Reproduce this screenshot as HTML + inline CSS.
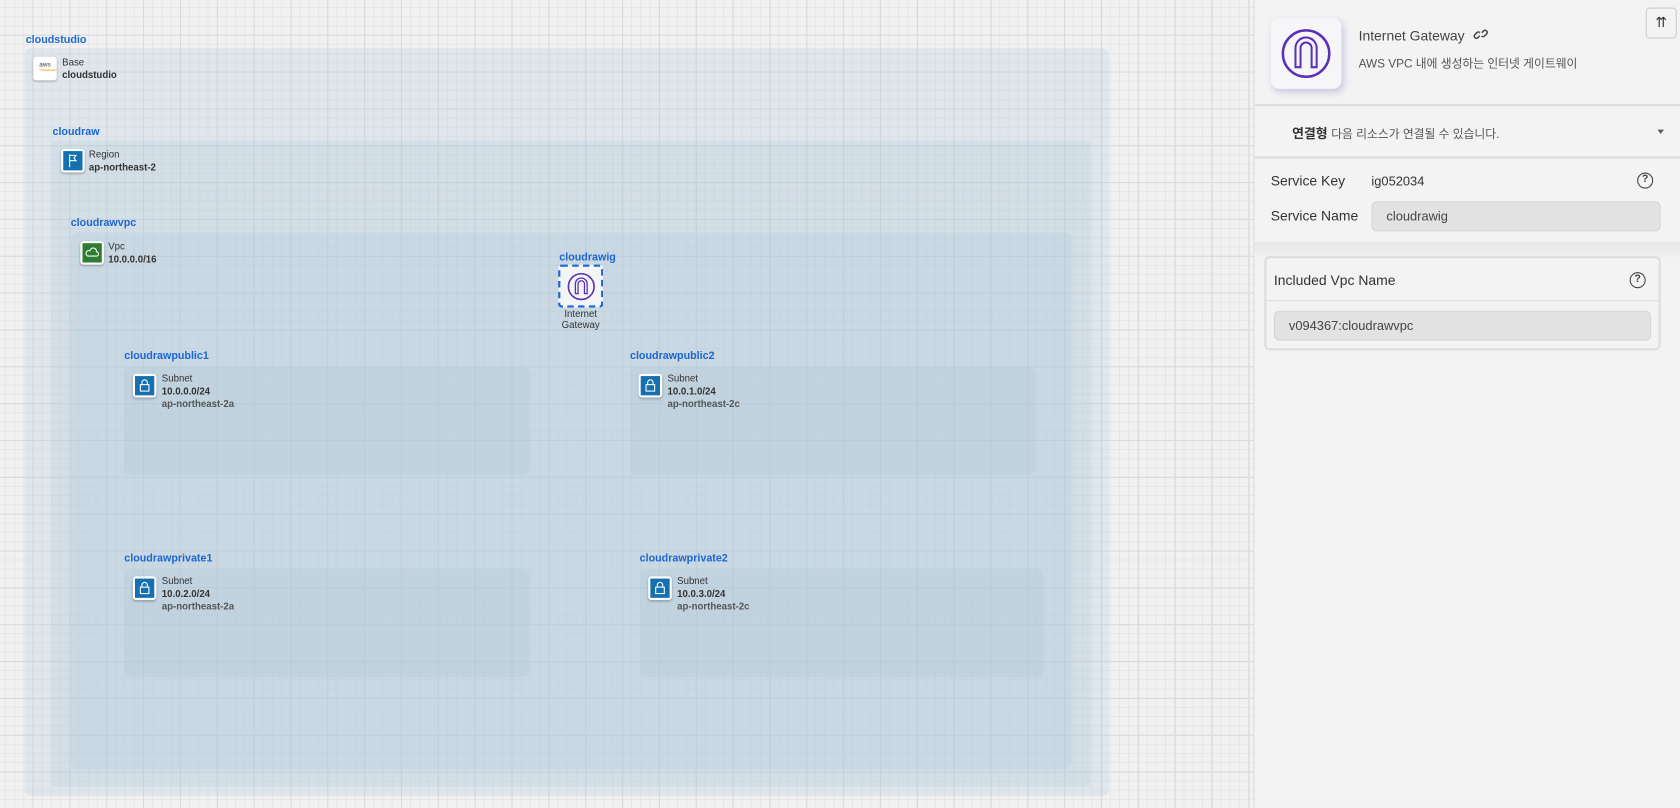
<!DOCTYPE html>
<html><head><meta charset="utf-8"><style>
*{margin:0;padding:0;box-sizing:border-box}
body{width:1680px;height:807px;overflow:hidden;font-family:"Liberation Sans","Noto Sans CJK KR",sans-serif;background:#f0f0f0;position:relative}
#wrap{position:absolute;left:0;top:0;width:1568px;height:754px;transform:scale(1.07143);transform-origin:0 0}
#canvas{position:absolute;left:0;top:0;width:1170px;height:754px;background-color:#f1f1f1;
background-image:linear-gradient(#d9d9d9 1px,transparent 1px),linear-gradient(90deg,#d9d9d9 1px,transparent 1px),linear-gradient(#e6e6e6 1px,transparent 1px),linear-gradient(90deg,#e6e6e6 1px,transparent 1px);
background-size:34.4px 34.4px,34.4px 34.4px,8.6px 8.6px,8.6px 8.6px;background-position:-4px -2px}
.box{position:absolute;border-radius:6px;background:rgba(170,195,215,0.22)}
.lbl{position:absolute;color:#1c67d2;font-weight:bold;font-size:10px}
.ic{position:absolute;width:22px;height:22px;border-radius:3px;background:#fff;box-shadow:0 1px 2px rgba(0,0,0,.25);padding:2px}
.ic div{width:100%;height:100%}
.t{position:absolute;font-size:9px;color:#333;line-height:12px}
.t b{color:#333}
.t .g{color:#555;font-weight:bold}
#panel{position:absolute;left:1170px;top:0;width:398px;height:754px;background:#f3f3f3;border-left:1px solid #ddd}
</style></head><body>
<div id="wrap">
<div id="canvas">
<div class="lbl" style="left:24px;top:32px">cloudstudio</div>
<div class="box" style="left:23px;top:45px;width:1012px;height:698px;background:rgba(190,210,225,0.35)"></div>
<div class="ic" style="left:31px;top:53px"><div style="font-size:6px;color:#333;text-align:center;line-height:12px">aws<div style="height:2px;border-bottom:1px solid #f90;border-radius:0 0 50% 50%;margin:-3px 3px 0"></div></div></div>
<div class="t" style="left:58px;top:52px">Base<br><b>cloudstudio</b></div>

<div class="lbl" style="left:49px;top:118px">cloudraw</div>
<div class="box" style="left:48px;top:131px;width:970px;height:604px"></div>
<div class="ic" style="left:57px;top:139px"><div style="background:#1570b0;position:relative"><svg width="18" height="18" viewBox="0 0 18 18"><path d="M6 3v12M6 4h6l-2 2.5 2 2.5H6" stroke="#fff" fill="none" stroke-width="1"/></svg></div></div>
<div class="t" style="left:83px;top:138px">Region<br><b>ap-northeast-2</b></div>

<div class="lbl" style="left:66px;top:203px">cloudrawvpc</div>
<div class="box" style="left:66px;top:217px;width:934px;height:501px"></div>
<div class="ic" style="left:75px;top:225px"><div style="background:#2e7d32"><svg width="18" height="18" viewBox="0 0 18 18"><path d="M5 12h8a2 2 0 0 0 0-4 3 3 0 0 0-6-1 2.5 2.5 0 0 0-2 5z" stroke="#fff" fill="none" stroke-width="1"/></svg></div></div>
<div class="t" style="left:101px;top:224px">Vpc<br><b>10.0.0.0/16</b></div>

<div class="lbl" style="left:522px;top:235px">cloudrawig</div>
<div style="position:absolute;left:521px;top:247px;width:42px;height:40px;border:2px dashed #1c67d2;border-radius:3px;background:#f4f5f7"></div>
<svg style="position:absolute;left:529px;top:254px" width="27" height="27" viewBox="0 0 27 27"><circle cx="13.5" cy="13.5" r="12" stroke="#5a30b5" stroke-width="1.5" fill="none"/><path d="M8 20V11a5.5 5.5 0 0 1 11 0v9h-2.5v-9a3 3 0 0 0-6 0v9z" stroke="#5a30b5" stroke-width="1.2" fill="none"/></svg>
<div class="t" style="left:512px;top:288px;width:60px;text-align:center;line-height:10px">Internet<br>Gateway</div>

<div class="lbl" style="left:116px;top:327px">cloudrawpublic1</div>
<div class="box" style="left:116px;top:342px;width:378px;height:101px"></div>
<div class="lbl" style="left:588px;top:327px">cloudrawpublic2</div>
<div class="box" style="left:588px;top:342px;width:378px;height:101px"></div>
<div class="lbl" style="left:116px;top:516px">cloudrawprivate1</div>
<div class="box" style="left:116px;top:531px;width:378px;height:101px"></div>
<div class="lbl" style="left:597px;top:516px">cloudrawprivate2</div>
<div class="box" style="left:597px;top:531px;width:377px;height:101px"></div>

<div class="ic" style="left:124px;top:349px"><div style="background:#1570b0"><svg width="18" height="18" viewBox="0 0 18 18"><rect x="5" y="8" width="8" height="6" stroke="#fff" fill="none"/><path d="M6.5 8V6a2.5 2.5 0 0 1 5 0v2" stroke="#fff" fill="none"/></svg></div></div>
<div class="t" style="left:151px;top:347px">Subnet<br><b>10.0.0.0/24</b><br><span class="g">ap-northeast-2a</span></div>
<div class="ic" style="left:596px;top:349px"><div style="background:#1570b0"><svg width="18" height="18" viewBox="0 0 18 18"><rect x="5" y="8" width="8" height="6" stroke="#fff" fill="none"/><path d="M6.5 8V6a2.5 2.5 0 0 1 5 0v2" stroke="#fff" fill="none"/></svg></div></div>
<div class="t" style="left:623px;top:347px">Subnet<br><b>10.0.1.0/24</b><br><span class="g">ap-northeast-2c</span></div>
<div class="ic" style="left:124px;top:538px"><div style="background:#1570b0"><svg width="18" height="18" viewBox="0 0 18 18"><rect x="5" y="8" width="8" height="6" stroke="#fff" fill="none"/><path d="M6.5 8V6a2.5 2.5 0 0 1 5 0v2" stroke="#fff" fill="none"/></svg></div></div>
<div class="t" style="left:151px;top:536px">Subnet<br><b>10.0.2.0/24</b><br><span class="g">ap-northeast-2a</span></div>
<div class="ic" style="left:605px;top:538px"><div style="background:#1570b0"><svg width="18" height="18" viewBox="0 0 18 18"><rect x="5" y="8" width="8" height="6" stroke="#fff" fill="none"/><path d="M6.5 8V6a2.5 2.5 0 0 1 5 0v2" stroke="#fff" fill="none"/></svg></div></div>
<div class="t" style="left:632px;top:536px">Subnet<br><b>10.0.3.0/24</b><br><span class="g">ap-northeast-2c</span></div>
</div>

<div id="panel">
<div style="position:absolute;left:15px;top:17px;width:66px;height:66px;border-radius:8px;background:#f6f6f8;box-shadow:2px 3px 6px rgba(110,110,190,.3)"><svg style="position:absolute;left:9px;top:9px" width="48" height="48" viewBox="0 0 51 51"><circle cx="25.5" cy="25.5" r="23" stroke="#5a30b5" stroke-width="2.5" fill="none"/><path d="M15 39V20a10.5 10.5 0 0 1 21 0v19h-5V20a5.5 5.5 0 0 0-11 0v19z" stroke="#5a30b5" stroke-width="2" fill="none"/></svg></div>
<div style="position:absolute;left:97px;top:25px;font-size:13px;color:#444">Internet Gateway <svg width="14" height="14" viewBox="0 0 14 14" style="vertical-align:-1px;margin-left:4px"><path d="M6 8.5l-1.8 1.8a2 2 0 0 1-2.8-2.8L3.5 5.4a2 2 0 0 1 2.8 0M8 5.5l1.8-1.8a2 2 0 0 1 2.8 2.8L10.5 8.6a2 2 0 0 1-2.8 0" stroke="#444" fill="none" stroke-width="1.4"/></svg></div>
<div style="position:absolute;left:97px;top:51px;font-size:11px;color:#555">AWS VPC 내에 생성하는 인터넷 게이트웨이</div>
<div style="position:absolute;left:365px;top:7px;width:29px;height:29px;border:1px solid #ccc;border-radius:4px;font-size:13px;text-align:center;line-height:26px;color:#333">⇈</div>
<div style="position:absolute;left:0;top:97px;width:398px;height:2px;background:#ddd"></div>
<div style="position:absolute;left:35px;top:116px;font-size:12px;color:#333"><b>연결형</b> <span style="font-size:11px;color:#555">다음 리소스가 연결될 수 있습니다.</span></div>
<div style="position:absolute;left:376px;top:121px;border:3px solid transparent;border-top:4px solid #555"></div>
<div style="position:absolute;left:0;top:146px;width:398px;height:2px;background:#ddd"></div>
<div style="position:absolute;left:15px;top:161px;font-size:13px;color:#333">Service Key</div>
<div style="position:absolute;left:109px;top:162px;font-size:12px;color:#333">ig052034</div>
<div style="position:absolute;left:357px;top:161px;width:15px;height:15px;border:1.5px solid #444;border-radius:50%;font-size:10px;text-align:center;line-height:12px;color:#444;font-weight:bold">?</div>
<div style="position:absolute;left:15px;top:194px;font-size:13px;color:#333">Service Name</div>
<div style="position:absolute;left:109px;top:188px;width:270px;height:28px;background:#e2e2e2;border:1px solid #d6d6d6;border-radius:5px;font-size:12px;color:#444;padding:6px 13px">cloudrawig</div>
<div style="position:absolute;left:0;top:226px;width:398px;height:16px;background:linear-gradient(#e6e6e6,#f3f3f3)"></div>
<div style="position:absolute;left:9px;top:239px;width:370px;height:88px;border:2px solid #ddd;border-radius:5px">
<div style="position:absolute;left:7px;top:13px;font-size:13px;color:#333">Included Vpc Name</div>
<div style="position:absolute;left:339px;top:13px;width:15px;height:15px;border:1.5px solid #444;border-radius:50%;font-size:10px;text-align:center;line-height:12px;color:#444;font-weight:bold">?</div>
<div style="position:absolute;left:0;top:39px;width:366px;height:1px;background:#ddd"></div>
<div style="position:absolute;left:7px;top:49px;width:352px;height:28px;background:#e2e2e2;border:1px solid #d6d6d6;border-radius:5px;font-size:12px;color:#444;padding:6px 13px">v094367:cloudrawvpc</div>
</div>
</div>
</div>
</body></html>
